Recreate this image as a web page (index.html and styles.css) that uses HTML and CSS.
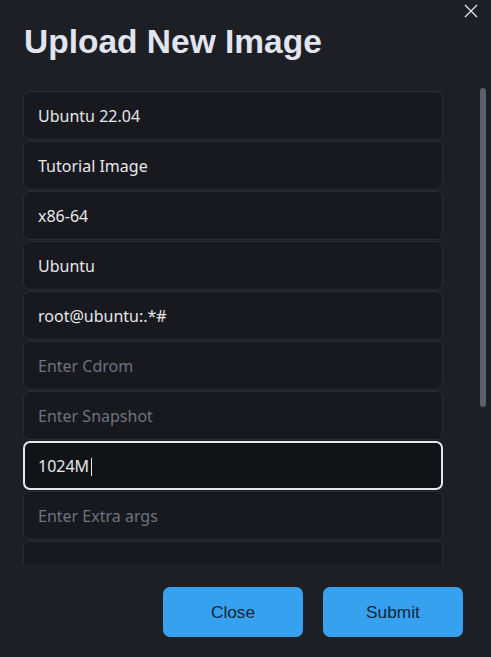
FILE: index.html
```html
<!DOCTYPE html>
<html lang="en">
<head>
<meta charset="utf-8">
<title>Upload New Image</title>
<link rel="stylesheet" href="styles.css">
</head>
<body>
<div class="modal">
  <button class="close-x" aria-label="Close">
    <svg width="14" height="14" viewBox="0 0 14 14"><path d="M1 1 L13 13 M13 1 L1 13" stroke="#e6e8ee" stroke-width="1.3" fill="none"/></svg>
  </button>
  <h1 class="title">Upload New Image</h1>
  <div class="form-area">
    <div class="form-scroll">
      <div class="fields">
        <input class="field" value="Ubuntu 22.04">
        <input class="field" value="Tutorial Image">
        <input class="field" value="x86-64">
        <input class="field" value="Ubuntu">
        <input class="field" value="root@ubuntu:.*#">
        <input class="field" placeholder="Enter Cdrom">
        <input class="field" placeholder="Enter Snapshot">
        <div class="field-wrap">
          <input class="field focused" value="1024M">
          <span class="caret"></span>
        </div>
        <input class="field" placeholder="Enter Extra args">
        <input class="field">
        <input class="field">
        <input class="field">
        <input class="field">
        <input class="field">
      </div>
    </div>
    <div class="scroll-thumb"></div>
  </div>
  <div class="actions">
    <button class="btn">Close</button>
    <button class="btn">Submit</button>
  </div>
</div>
</body>
</html>
```
FILE: styles.css
```css
html, body {
  margin: 0;
  padding: 0;
  background: #1e1f24;
  height: 100%;
  overflow: hidden;
}
.modal {
  position: relative;
  width: 491px;
  height: 657px;
  display: flex;
  flex-direction: column;
}
.close-x {
  position: absolute;
  top: 4px;
  right: 13px;
  width: 14px;
  height: 14px;
  padding: 0;
  border: 0;
  background: transparent;
  display: flex;
}
.title {
  margin: 20px 0 0 24px;
  height: 44px;
  font-family: "Liberation Sans", Arial, sans-serif;
  font-weight: 700;
  font-size: 33.5px;
  line-height: 44px;
  color: #e1e5ef;
}
.form-area {
  position: relative;
  margin: 24px 0 0 23px;
  width: 463px;
  height: 476px;
}
.form-scroll {
  width: 100%;
  height: 100%;
  overflow-y: auto;
  scrollbar-width: none;
}
.form-scroll::-webkit-scrollbar {
  display: none;
}
.scroll-thumb {
  position: absolute;
  top: 0;
  left: 457px;
  width: 6px;
  height: 319px;
  border-radius: 3px;
  background: #5b606c;
}
.fields {
  display: flex;
  flex-direction: column;
  gap: 1px;
  padding: 3px 0 7px;
  width: 420px;
}
.field-wrap {
  position: relative;
  display: flex;
}
.field {
  box-sizing: border-box;
  width: 420px;
  height: 49px;
  flex-shrink: 0;
  margin: 0;
  padding: 0 0 0 14px;
  border: 1px solid #2c2d34;
  border-radius: 7px;
  background: #18191e;
  color: #e6e8ec;
  font-family: "Noto Sans", sans-serif;
  font-size: 16px;
  outline: none;
}
.field::placeholder {
  color: #6d7380;
}
.field.focused {
  border: 2px solid #e4e7ee;
  padding-left: 13px;
  background: #121317;
}
.caret {
  position: absolute;
  left: 68px;
  top: 17px;
  width: 1px;
  height: 18px;
  background: #e6e8ec;
}
.actions {
  display: flex;
  justify-content: flex-end;
  gap: 20px;
  padding: 23px 28px 0 0;
}
.btn {
  width: 140px;
  height: 50px;
  border: 0;
  border-radius: 7px;
  background: #36a1ee;
  color: #172537;
  font-family: "Liberation Sans", Arial, sans-serif;
  font-size: 17.3px;
  padding: 0;
}
```
